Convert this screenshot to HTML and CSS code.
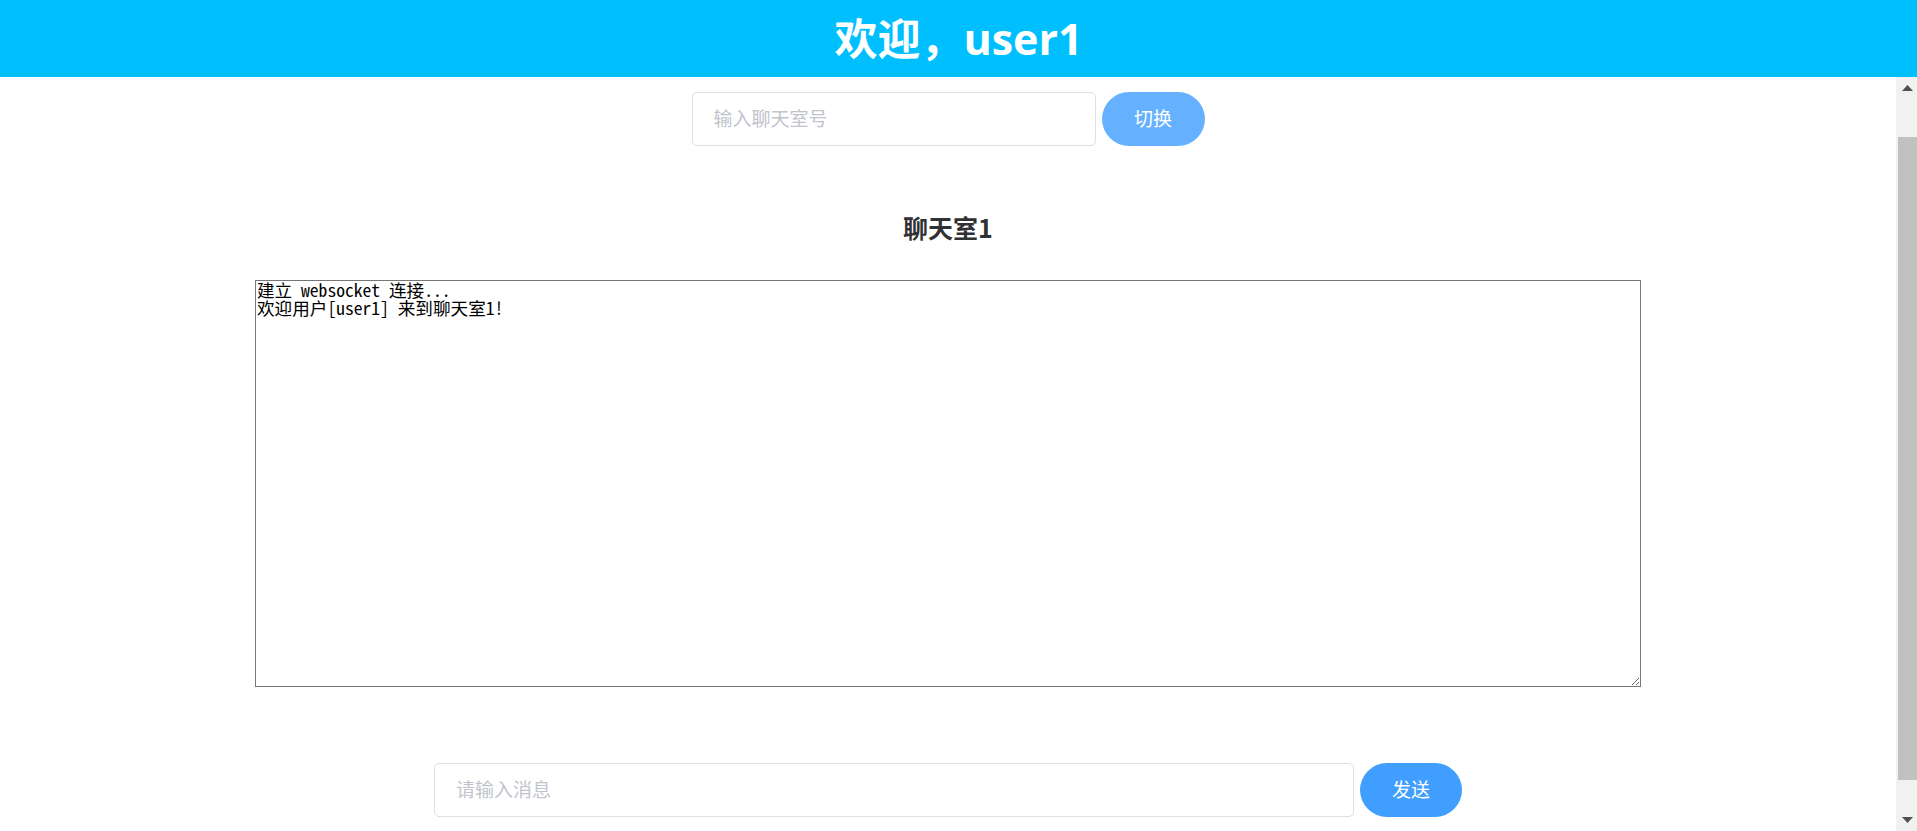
FILE: index.html
```html
<!DOCTYPE html>
<html lang="zh-CN">
<head>
<meta charset="utf-8">
<title>聊天室</title>
<link rel="stylesheet" href="styles.css">
</head>
<body>
<header class="topbar">
  <h1 class="welcome">欢迎，user1</h1>
</header>
<div class="viewport">
  <main class="main" id="main">
    <div class="content">
      <div class="row room-row">
        <input class="field room-field" type="text" placeholder="输入聊天室号">
        <button class="btn btn-light" type="button">切换</button>
      </div>
      <h3 class="room-title">聊天室1</h3>
      <textarea class="log" readonly>建立 websocket 连接...
欢迎用户[user1] 来到聊天室1!</textarea>
      <div class="row msg-row">
        <input class="field msg-field" type="text" placeholder="请输入消息">
        <button class="btn btn-primary" type="button">发送</button>
      </div>
    </div>
  </main>
  <div class="scrollbar" aria-hidden="true">
    <div class="sb-btn">
      <svg width="11" height="6" viewBox="0 0 11 6"><polygon points="0,6 11,6 5.5,0" fill="#505050"/></svg>
    </div>
    <div class="sb-track">
      <div class="sb-thumb"></div>
    </div>
    <div class="sb-btn">
      <svg width="11" height="6" viewBox="0 0 11 6"><polygon points="0,0 11,0 5.5,6" fill="#505050"/></svg>
    </div>
  </div>
</div>
<script src="script.js"></script>
</body>
</html>
```

FILE: styles.css
```css
html, body {
  margin: 0;
  padding: 0;
  height: 100%;
  overflow: hidden;
  background: #ffffff;
  font-family: "Noto Sans CJK SC", "Noto Sans", sans-serif;
}

body {
  display: flex;
  flex-direction: column;
}

.topbar {
  flex: 0 0 77px;
  background: #00bfff;
  display: flex;
  align-items: center;
  justify-content: center;
}

.welcome {
  margin: 0;
  color: #ffffff;
  font-size: 43px;
  font-weight: 700;
  line-height: 1;
  font-family: "Open Sans", "Noto Sans CJK SC", sans-serif;
}

.viewport {
  flex: 1 1 auto;
  min-height: 0;
  display: flex;
}

.main {
  flex: 1 1 auto;
  min-width: 0;
  overflow-y: scroll;
  scrollbar-width: none;
}
.main::-webkit-scrollbar {
  display: none;
}

.scrollbar {
  flex: 0 0 21px;
  display: flex;
  flex-direction: column;
  background: #f1f1f1;
}
.sb-btn {
  height: 22px;
  display: flex;
  align-items: center;
  justify-content: center;
  padding-left: 2px;
}
.sb-btn svg {
  display: block;
}
.sb-track {
  flex: 1 1 auto;
  padding-left: 2px;
}
.sb-thumb {
  margin-top: 38px;
  height: 643px;
  background: #c1c1c1;
}

.content {
  display: flex;
  flex-direction: column;
  align-items: center;
  padding: 58px 0 50px;
}

.row {
  display: flex;
  align-items: center;
  gap: 6px;
}

.field {
  box-sizing: border-box;
  height: 54px;
  border: 1px solid #dcdfe6;
  border-radius: 5px;
  padding: 0 21px 3px;
  font-size: 19px;
  font-family: "Noto Sans CJK SC", "Noto Sans", sans-serif;
  color: #606266;
  outline: none;
  background: #fff;
}
.field::placeholder {
  color: #c0c4cc;
}

.room-field { width: 404px; }
.msg-field { width: 920px; }

.btn {
  box-sizing: border-box;
  height: 54px;
  border: none;
  border-radius: 27px;
  color: #ffffff;
  font-size: 19px;
  font-family: "Noto Sans CJK SC", "Noto Sans", sans-serif;
  padding: 0 0 3px;
  cursor: pointer;
}
.btn-light {
  width: 103px;
  background: #66b1ff;
}
.btn-primary {
  width: 102px;
  background: #409eff;
}

.room-title {
  margin: 66px 0 38px;
  height: 30px;
  line-height: 30px;
  font-size: 25px;
  font-weight: 700;
  color: #303133;
}

.log {
  box-sizing: border-box;
  width: 1386px;
  height: 407px;
  margin: 0 0 76px;
  padding: 0 1px 1px;
  border: 1px solid #767676;
  border-radius: 0;
  font-family: "Noto Sans Mono CJK SC", "Liberation Mono", monospace;
  font-size: 17.6px;
  line-height: 18px;
  color: #000;
  resize: both;
  outline: none;
}
```

FILE: script.js
```js
document.getElementById('main').scrollTop = 43;
```
